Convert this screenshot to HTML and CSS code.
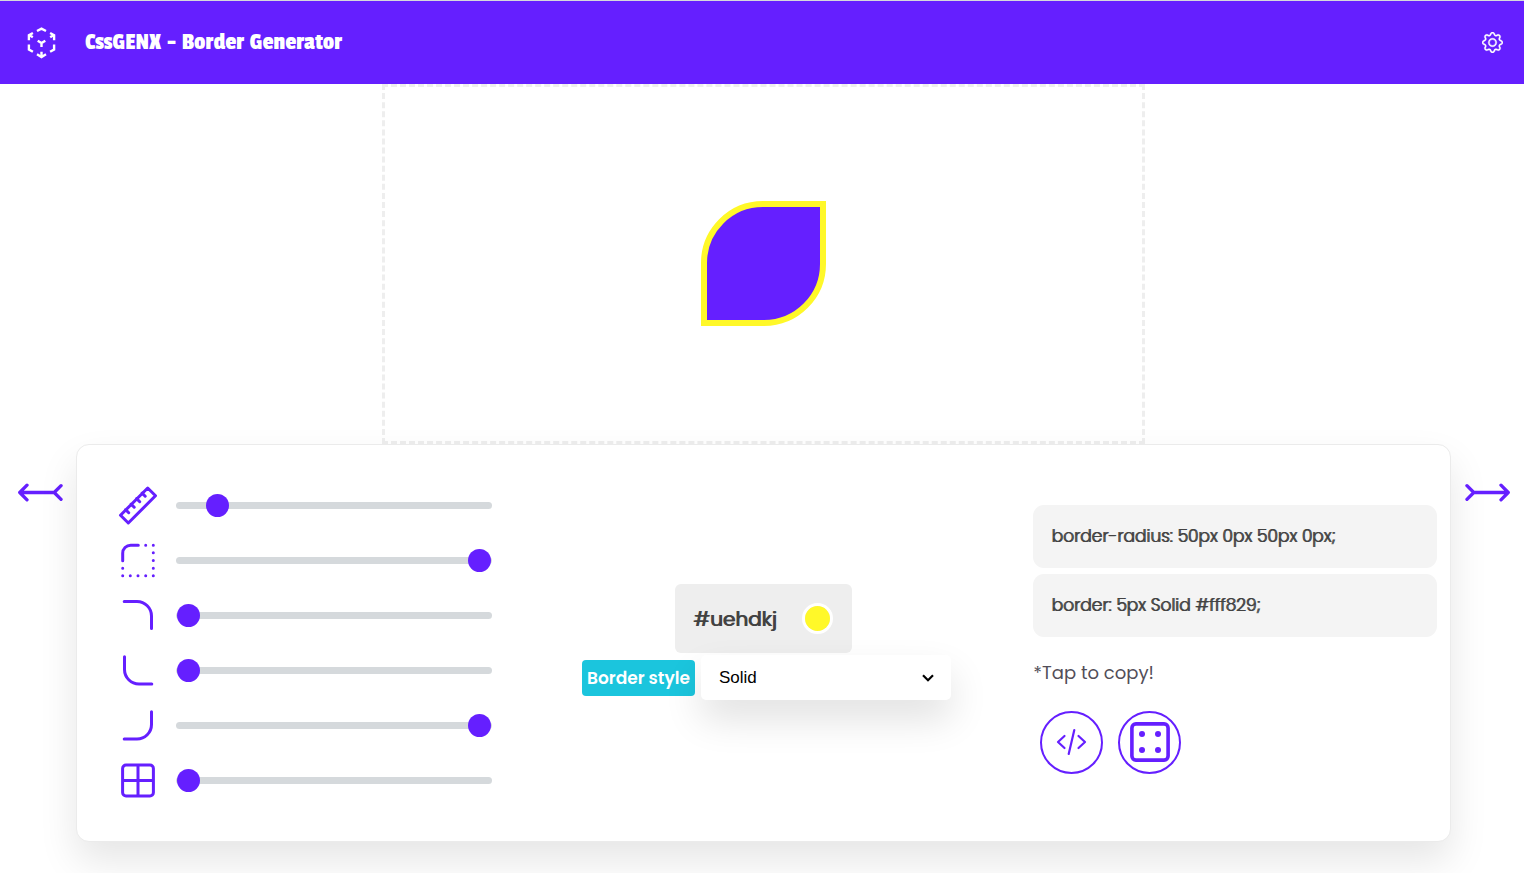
FILE: index.html
```
<!DOCTYPE html>
<html lang="en">

<head>
    <meta charset="UTF-8">
    <meta name="viewport" content="width=device-width, initial-scale=1.0">
    <title>CssGENX - Border Generator</title>
    <link rel="stylesheet" href="styles.css">
</head>

<body>
    <header class="navbar">
        <a href="#" class="logo" aria-label="Home">
            <svg width="31" height="32" viewBox="0 0 31 32" fill="none" stroke="currentColor" stroke-width="2.4">
                <path d="M11 4l4.5-2.4L20 4M2.9 13.2V8.2l4-2.2M3 7.8l3.8 2.4M28.1 13.2V8.2l-4-2.2M28 7.8l-3.8 2.4M2.9 17.5v5l4 2.3M28.1 17.5v5l-4 2.3M11.7 13.7l3.8 2.3 3.8-2.3M15.5 16v4M11 27.3l4.5 2.7 4.5-2.7M15.5 24.7V30" />
            </svg>
        </a>
        <h1 class="title">CssGENX - Border Generator</h1>
        <button type="button" class="settings" aria-label="Settings">
            <svg width="21" height="21" viewBox="0 0 16 16" fill="currentColor" stroke="currentColor" stroke-width=".3">
                <path d="M8 4.754a3.246 3.246 0 1 0 0 6.492 3.246 3.246 0 0 0 0-6.492zM5.754 8a2.246 2.246 0 1 1 4.492 0 2.246 2.246 0 0 1-4.492 0z" />
                <path d="M9.796 1.343c-.527-1.79-3.065-1.79-3.592 0l-.094.319a.873.873 0 0 1-1.255.52l-.292-.16c-1.64-.892-3.433.902-2.54 2.541l.159.292a.873.873 0 0 1-.52 1.255l-.319.094c-1.79.527-1.79 3.065 0 3.592l.319.094a.873.873 0 0 1 .52 1.255l-.16.292c-.892 1.64.901 3.434 2.541 2.54l.292-.159a.873.873 0 0 1 1.255.52l.094.319c.527 1.79 3.065 1.79 3.592 0l.094-.319a.873.873 0 0 1 1.255-.52l.292.16c1.64.893 3.434-.902 2.54-2.541l-.159-.292a.873.873 0 0 1 .52-1.255l.319-.094c1.79-.527 1.79-3.065 0-3.592l-.319-.094a.873.873 0 0 1-.52-1.255l.16-.292c.893-1.64-.902-3.433-2.541-2.54l-.292.159a.873.873 0 0 1-1.255-.52l-.094-.319zm-2.633.283c.246-.835 1.428-.835 1.674 0l.094.319a1.873 1.873 0 0 0 2.693 1.115l.291-.16c.764-.415 1.6.42 1.184 1.185l-.159.292a1.873 1.873 0 0 0 1.116 2.692l.318.094c.835.246.835 1.428 0 1.674l-.319.094a1.873 1.873 0 0 0-1.115 2.693l.16.291c.415.764-.42 1.6-1.185 1.184l-.291-.159a1.873 1.873 0 0 0-2.693 1.116l-.094.318c-.246.835-1.428.835-1.674 0l-.094-.319a1.873 1.873 0 0 0-2.692-1.115l-.292.16c-.764.415-1.6-.42-1.184-1.185l.159-.291A1.873 1.873 0 0 0 1.945 8.93l-.319-.094c-.835-.246-.835-1.428 0-1.674l.319-.094A1.873 1.873 0 0 0 3.06 4.377l-.16-.292c-.415-.764.42-1.6 1.185-1.184l.292.159a1.873 1.873 0 0 0 2.692-1.115l.094-.319z" />
            </svg>
        </button>
    </header>

    <section class="preview">
        <div class="stage">
            <div class="shape"></div>
        </div>
    </section>

    <main class="workspace">
        <button type="button" class="arrow arrow-prev" aria-label="Previous">
            <svg width="45" height="19" viewBox="0 0 46 19" fill="none" stroke="currentColor" stroke-width="3.4" stroke-linecap="round" stroke-linejoin="round">
                <path d="M9.2 2L1.8 9.5l7.4 7.5M2 9.5h35M44 2.5l-7 7 7 7" />
            </svg>
        </button>

        <div class="panel">
            <div class="sliders">
                <div class="slider-row">
                    <label for="width">
                        <svg class="icon" viewBox="0 .5 40 40" role="img" aria-label="Border width">
                            <path d="M29.7 2.5l7.8 7.8-27.2 27.2-7.8-7.8zM7.6 24.1l3.1 3.1M13.1 18.6l3.1 3.1M18.6 13.1l3.1 3.1M24.1 7.6l3.1 3.1" />
                        </svg>
                    </label>
                    <input type="range" id="width" class="slider" min="0" max="50" value="5">
                </div>
                <div class="slider-row">
                    <label for="top-left">
                        <svg class="icon" viewBox="0 .5 40 40" role="img" aria-label="Top left radius">
                            <path d="M4.7 20.2v-7.5a8 8 0 0 1 8-8h7.6" />
                            <path d="M27.7 4.7h0M35.3 4.7h0M35.3 12.3h0M35.3 20h0M35.3 27.7h0M35.3 35.3h0M27.7 35.3h0M20 35.3h0M12.3 35.3h0M4.7 35.3h0M4.7 27.7h0" />
                        </svg>
                    </label>
                    <input type="range" id="top-left" class="slider" min="0" max="50" value="50">
                </div>
                <div class="slider-row">
                    <label for="top-right">
                        <svg class="icon" viewBox="0 1 40 40" role="img" aria-label="Top right radius">
                            <path d="M6.2 6.5H19a14.5 14.5 0 0 1 14.5 14.5V33.5" />
                        </svg>
                    </label>
                    <input type="range" id="top-right" class="slider" min="0" max="50" value="0">
                </div>
                <div class="slider-row">
                    <label for="bottom-left">
                        <svg class="icon" viewBox="0 .5 40 40" role="img" aria-label="Bottom left radius">
                            <path d="M6.5 6.2V19A14.5 14.5 0 0 0 21 33.5H33.8" />
                        </svg>
                    </label>
                    <input type="range" id="bottom-left" class="slider" min="0" max="50" value="0">
                </div>
                <div class="slider-row">
                    <label for="bottom-right">
                        <svg class="icon" viewBox="0 .5 40 40" role="img" aria-label="Bottom right radius">
                            <path d="M33.5 6.2V19A14.5 14.5 0 0 1 19 33.5H6.2" />
                        </svg>
                    </label>
                    <input type="range" id="bottom-right" class="slider" min="0" max="50" value="50">
                </div>
                <div class="slider-row">
                    <label for="all">
                        <svg class="icon" viewBox="0 .5 40 40" role="img" aria-label="All corners">
                            <path d="M8 4.6h24a3.4 3.4 0 0 1 3.4 3.4v24a3.4 3.4 0 0 1-3.4 3.4H8A3.4 3.4 0 0 1 4.6 32V8A3.4 3.4 0 0 1 8 4.6zM20 4.6v30.8M4.6 20h30.8" />
                        </svg>
                    </label>
                    <input type="range" id="all" class="slider" min="0" max="50" value="0">
                </div>
            </div>

            <div class="options">
                <div class="color-box">
                    <label for="color">#uehdkj</label>
                    <input type="color" id="color" class="color" value="#fff829">
                </div>
                <div class="style-row">
                    <label for="style" class="style-label">Border style</label>
                    <div class="select-wrap">
                        <select id="style" class="select">
                            <option>Solid</option>
                            <option>Dashed</option>
                            <option>Dotted</option>
                            <option>Double</option>
                        </select>
                        <svg class="chevron" width="12" height="8" viewBox="0 0 12 8" fill="none" stroke="currentColor" stroke-width="2.2">
                            <path d="M1 1.2l5 5 5-5" />
                        </svg>
                    </div>
                </div>
            </div>

            <div class="output">
                <button type="button" class="code">border-radius: 50px 0px 50px 0px;</button>
                <button type="button" class="code">border: 5px Solid #fff829;</button>
                <p class="hint">*Tap to copy!</p>
                <div class="actions">
                    <button type="button" class="round" aria-label="Show code">
                        <svg width="31" height="30" viewBox="0 0 31 30" fill="none" stroke="currentColor" stroke-width="2.2" stroke-linecap="round" stroke-linejoin="round">
                            <path d="M8.5 9L2 15l6.5 6M22.5 9l6.5 6-6.5 6M18.3 3l-5.6 24" />
                        </svg>
                    </button>
                    <button type="button" class="round" aria-label="Random">
                        <svg width="40" height="40" viewBox="0 0 40 40" fill="currentColor">
                            <rect x="1.9" y="1.9" width="36.2" height="36.2" rx="4" fill="none" stroke="currentColor" stroke-width="3.6" />
                            <circle cx="12" cy="12" r="3" />
                            <circle cx="28" cy="12" r="3" />
                            <circle cx="12" cy="28" r="3" />
                            <circle cx="28" cy="28" r="3" />
                        </svg>
                    </button>
                </div>
            </div>
        </div>

        <button type="button" class="arrow arrow-next" aria-label="Next">
            <svg width="45" height="19" viewBox="0 0 46 19" fill="none" stroke="currentColor" stroke-width="3.4" stroke-linecap="round" stroke-linejoin="round">
                <path d="M36.8 2l7.4 7.5-7.4 7.5M44 9.5H9M2 2.5l7 7-7 7" />
            </svg>
        </button>
    </main>
</body>

</html>
```
FILE: styles.css
```
* {
    box-sizing: border-box;
    margin: 0;
    padding: 0;
}

body {
    min-height: 100vh;
    font-family: Poppins, Inter, sans-serif;
    color: #424242;
    background-color: white;
}

button {
    font: inherit;
    color: inherit;
    background: none;
    border: none;
    cursor: pointer;
}

svg {
    display: block;
}

/* Header */
.navbar {
    display: flex;
    align-items: center;
    height: 84px;
    padding: 0 21px 0 26px;
    color: white;
    background-color: #651fff;
    border-top: 1px solid #d5d9dc;
}

.logo {
    color: white;
}

.title {
    margin-left: 28px;
    padding-bottom: 2px;
    font-family: "Passion One", "Noto Sans", sans-serif;
    font-size: 25px;
    font-weight: 400;
    line-height: 28px;
}

.settings {
    margin-left: auto;
}

/* Preview */
.preview {
    padding: 0 73px 0 76px;
}

.stage {
    display: flex;
    align-items: center;
    justify-content: center;
    width: 55.5%;
    height: 360px;
    margin: 0 auto;
    padding-bottom: 1px;
    border: 3px dashed #eee;
}

.shape {
    width: 125px;
    height: 125px;
    background-color: #651fff;
    border: 6px solid #fff829;
    border-radius: 62px 0 62px 0;
}

/* Controls */
.workspace {
    display: grid;
    grid-template-columns: 76px 1fr 73px;
    align-items: start;
}

.arrow {
    display: flex;
    margin-top: 39px;
    color: #651fff;
}

.arrow-prev {
    justify-content: flex-end;
    padding-right: 13px;
}

.arrow-next {
    justify-content: flex-start;
    padding-left: 14px;
}

.panel {
    display: grid;
    grid-template-columns: repeat(3, 1fr);
    align-items: center;
    padding: 33px 0;
    background-color: white;
    border: 1px solid #ebebeb;
    border-radius: 13px;
    box-shadow: 0 19px 38px rgba(0, 0, 0, 0.1);
}

.sliders {
    padding: 0 43px 0 41px;
}

.slider-row {
    display: flex;
    align-items: center;
    gap: 18px;
    height: 55px;
}

.icon {
    width: 40px;
    height: 40px;
    fill: none;
    stroke: #651fff;
    stroke-width: 3;
    stroke-linecap: round;
    stroke-linejoin: round;
}

.slider {
    flex: 1;
    min-width: 0;
    height: 7px;
    padding: 0 1px;
    appearance: none;
    background-color: #d5d9dc;
    border-radius: 4px;
}

.slider::-webkit-slider-thumb {
    width: 23px;
    height: 23px;
    appearance: none;
    background-color: #651fff;
    border-radius: 50%;
    cursor: pointer;
}

.slider::-moz-range-thumb {
    width: 23px;
    height: 23px;
    background-color: #651fff;
    border: none;
    border-radius: 50%;
}

.options {
    display: flex;
    flex-direction: column;
    align-items: center;
    gap: 2px;
    padding-bottom: 2px;
}

.color-box {
    display: flex;
    align-items: center;
    justify-content: space-between;
    width: 177px;
    height: 69px;
    padding: 0 19px 0 18px;
    font-size: 20px;
    text-shadow: 1px 0 currentColor;
    background-color: #eee;
    border-radius: 6px;
}

.color {
    width: 31px;
    height: 31px;
    appearance: none;
    border: 3px solid white;
    border-radius: 50%;
    overflow: hidden;
    cursor: pointer;
}

.color::-webkit-color-swatch-wrapper {
    padding: 0;
}

.color::-webkit-color-swatch {
    border: none;
}

.style-row {
    display: flex;
    align-items: center;
    gap: 6px;
    margin-left: 6px;
}

.style-label {
    width: 113px;
    font-size: 17px;
    font-weight: 600;
    line-height: 36px;
    text-align: center;
    color: white;
    background-color: #1bc5dd;
    border-radius: 4px;
}

.select-wrap {
    display: grid;
    align-items: center;
    width: 250px;
}

.select {
    grid-area: 1 / 1;
    height: 45px;
    padding: 0 18px;
    appearance: none;
    font-family: "Liberation Sans", Arial, sans-serif;
    font-size: 17px;
    color: black;
    background-color: white;
    border: none;
    border-radius: 5px;
    box-shadow: 0 19px 38px rgba(0, 0, 0, 0.12);
}

.chevron {
    grid-area: 1 / 1;
    justify-self: end;
    margin-right: 17px;
    color: black;
    pointer-events: none;
    z-index: 1;
}

.output {
    display: flex;
    flex-direction: column;
    gap: 6px;
    padding: 0 13px 0 41px;
}

.code {
    padding: 0 18px;
    font-size: 17px;
    font-weight: 300;
    line-height: 63px;
    text-align: left;
    text-shadow: 1px 0 currentColor;
    background-color: #f4f4f4;
    border-radius: 11px;
}

.hint {
    padding: 17px 0 19px;
    font-size: 18px;
    line-height: 26px;
    color: #524e58;
}

.actions {
    display: flex;
    gap: 15px;
    padding: 0 7px 8px;
}

.round {
    display: flex;
    align-items: center;
    justify-content: center;
    width: 63px;
    height: 63px;
    color: #651fff;
    border: 2px solid #651fff;
    border-radius: 50%;
}
```
